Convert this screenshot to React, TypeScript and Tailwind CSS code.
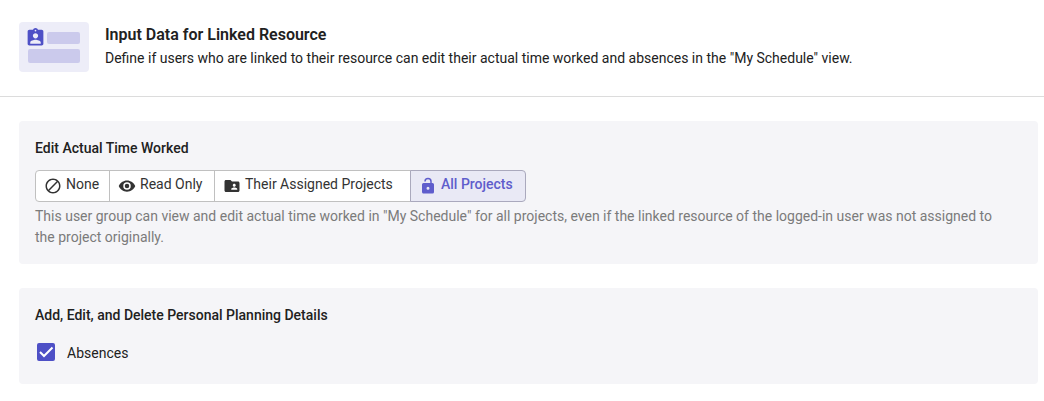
import React, { useState } from "react";

const icons = {
    none: "M12 2C6.5 2 2 6.5 2 12C2 17.5 6.5 22 12 22C17.5 22 22 17.5 22 12C22 6.5 17.5 2 12 2M12 4C13.9 4 15.6 4.6 16.9 5.7L5.7 16.9C4.7 15.5 4 13.8 4 12C4 7.6 7.6 4 12 4M7.1 18.3L18.3 7.1C19.4 8.4 20 10.1 20 12C20 16.4 16.4 20 12 20C10.1 20 8.4 19.4 7.1 18.3Z",
    read: "M12 9a3 3 0 0 0-3 3 3 3 0 0 0 3 3 3 3 0 0 0 3-3 3 3 0 0 0-3-3m0 8a5 5 0 0 1-5-5 5 5 0 0 1 5-5 5 5 0 0 1 5 5 5 5 0 0 1-5 5m0-12.5C7 4.500 2.730 7.610 1 12c1.730 4.390 6 7.500 11 7.500s9.270-3.110 11-7.500c-1.730-4.390-6-7.500-11-7.500z",
    assigned: "M20 6h-8l-2-2H4c-1.100 0-1.990.9-1.990 2L2 18c0 1.100.9 2 2 2h16c1.100 0 2-.9 2-2V8c0-1.100-.9-2-2-2zm-5 3c1.100 0 2 .9 2 2s-.9 2-2 2-2-.9-2-2 .9-2 2-2zm4 8h-8v-1c0-1.330 2.670-2 4-2s4 .67 4 2v1z",
    all: "M18 8A2 2 0 0 1 20 10V20A2 2 0 0 1 18 22H6C4.890 22 4 21.100 4 20V10A2 2 0 0 1 6 8H15V6A3 3 0 0 0 12 3A3 3 0 0 0 9 6H7A5 5 0 0 1 12 1A5 5 0 0 1 17 6V8H18M12 17A2 2 0 0 0 14 15A2 2 0 0 0 12 13A2 2 0 0 0 10 15A2 2 0 0 0 12 17Z",
    badge: "M19 3H14.800C14.400 1.800 13.300 1 12 1S9.600 1.800 9.200 3H5C3.900 3 3 3.900 3 5V19C3 20.100 3.900 21 5 21H19C20.100 21 21 20.100 21 19V5C21 3.900 20.100 3 19 3M12 3C12.600 3 13 3.400 13 4S12.600 5 12 5 11 4.600 11 4 11.400 3 12 3M12 7C13.700 7 15 8.300 15 10S13.700 13 12 13 9 11.700 9 10 10.300 7 12 7M18 19H6V17.600C6 15.600 10 14.500 12 14.500S18 15.600 18 17.600V19Z",
};

interface IconProps {
    path: string;
    className: string;
}

const Icon: React.FC<IconProps> = ({ path, className }) => (
    <svg viewBox="0 0 24 24" fill="currentColor" aria-hidden="true" className={className}>
        <path d={path} />
    </svg>
);

interface PanelProps {
    title: string;
    children: React.ReactNode;
}

const Panel: React.FC<PanelProps> = ({ title, children }) => (
    <section className="rounded bg-[#f5f5f8] p-4">
        <h2 className="text-sm leading-[22px] font-medium">{title}</h2>
        {children}
    </section>
);

const options = [
    { id: "none", label: "None", path: icons.none, width: "min-w-[75px]" },
    { id: "read", label: "Read Only", path: icons.read, width: "min-w-[106px]" },
    { id: "assigned", label: "Their Assigned Projects", path: icons.assigned, width: "min-w-[197px]" },
    { id: "all", label: "All Projects", path: icons.all, width: "min-w-[116px]" },
];

const App: React.FC = () => {
    const [access, setAccess] = useState("all");
    const [absences, setAbsences] = useState(true);

    return (
        <main className="bg-white font-['Roboto',sans-serif] text-[#212121]">
            <header className="flex items-center gap-4 border-b border-[#dcdcdc] px-[19px] pt-[22px] pb-6">
                <div className="flex h-[50px] w-[70px] shrink-0 flex-col gap-1 rounded bg-[#ededf8] px-[9px] pt-[5px]">
                    <div className="flex items-end gap-px">
                        <Icon path={icons.badge} className="-mb-[3px] -ml-[3px] size-[21px] text-[#4e50c6]" />
                        <div className="mb-px h-3 flex-1 rounded-xs bg-[#cbcaec]" />
                    </div>
                    <div className="h-3.5 rounded-xs bg-[#cbcaec]" />
                </div>
                <div>
                    <h1 className="text-base leading-6 font-semibold">Input Data for Linked Resource</h1>
                    <p className="pb-0.5 text-sm leading-[22px]">
                        Define if users who are linked to their resource can edit their actual time worked and absences in the "My Schedule" view.
                    </p>
                </div>
            </header>
            <div className="flex flex-col gap-6 py-6 pr-1.5 pl-[19px]">
                <Panel title="Edit Actual Time Worked">
                    <div className="mt-[11px] flex w-fit">
                        {options.map(({ id, label, path, width }) => (
                            <button
                                key={id}
                                type="button"
                                aria-pressed={access === id}
                                onClick={() => setAccess(id)}
                                className={`-ml-px flex h-8 items-center gap-1 border px-2 pb-1 text-sm first:ml-0 first:rounded-l last:rounded-r ${width} ${
                                    access === id
                                        ? "border-[#aaa9bd] bg-[#e9e9f5] font-medium text-[#5f5dcc]"
                                        : "border-[#c0c0c0] bg-white text-[#333333]"
                                }`}
                            >
                                <Icon path={path} className="mt-1 size-[18px] shrink-0" />
                                {label}
                            </button>
                        ))}
                    </div>
                    <p className="mt-1 pr-2.5 text-sm leading-[21px] text-[#7b7b7b]">
                        This user group can view and edit actual time worked in "My Schedule" for all projects, even if the linked resource of the logged-in user was not assigned to the project originally.
                    </p>
                </Panel>
                <Panel title="Add, Edit, and Delete Personal Planning Details">
                    <div className="mt-3 mb-0.5 flex px-0.5">
                        <label className="flex h-7 items-center gap-3 text-sm">
                            <span className="relative flex size-[18px]">
                                <input
                                    type="checkbox"
                                    checked={absences}
                                    onChange={(e) => setAbsences(e.target.checked)}
                                    className="peer size-[18px] appearance-none rounded-xs border-2 border-[#757575] checked:border-[#4e50c6] checked:bg-[#4e50c6]"
                                />
                                <svg viewBox="0 0 18 18" fill="none" aria-hidden="true" className="pointer-events-none absolute inset-0 hidden size-[18px] peer-checked:block">
                                    <path d="M3 9L7 13L15.500 4.500" stroke="white" strokeWidth="2" />
                                </svg>
                            </span>
                            <span className="pt-0.5">Absences</span>
                        </label>
                    </div>
                </Panel>
            </div>
        </main>
    );
};

export default App;
